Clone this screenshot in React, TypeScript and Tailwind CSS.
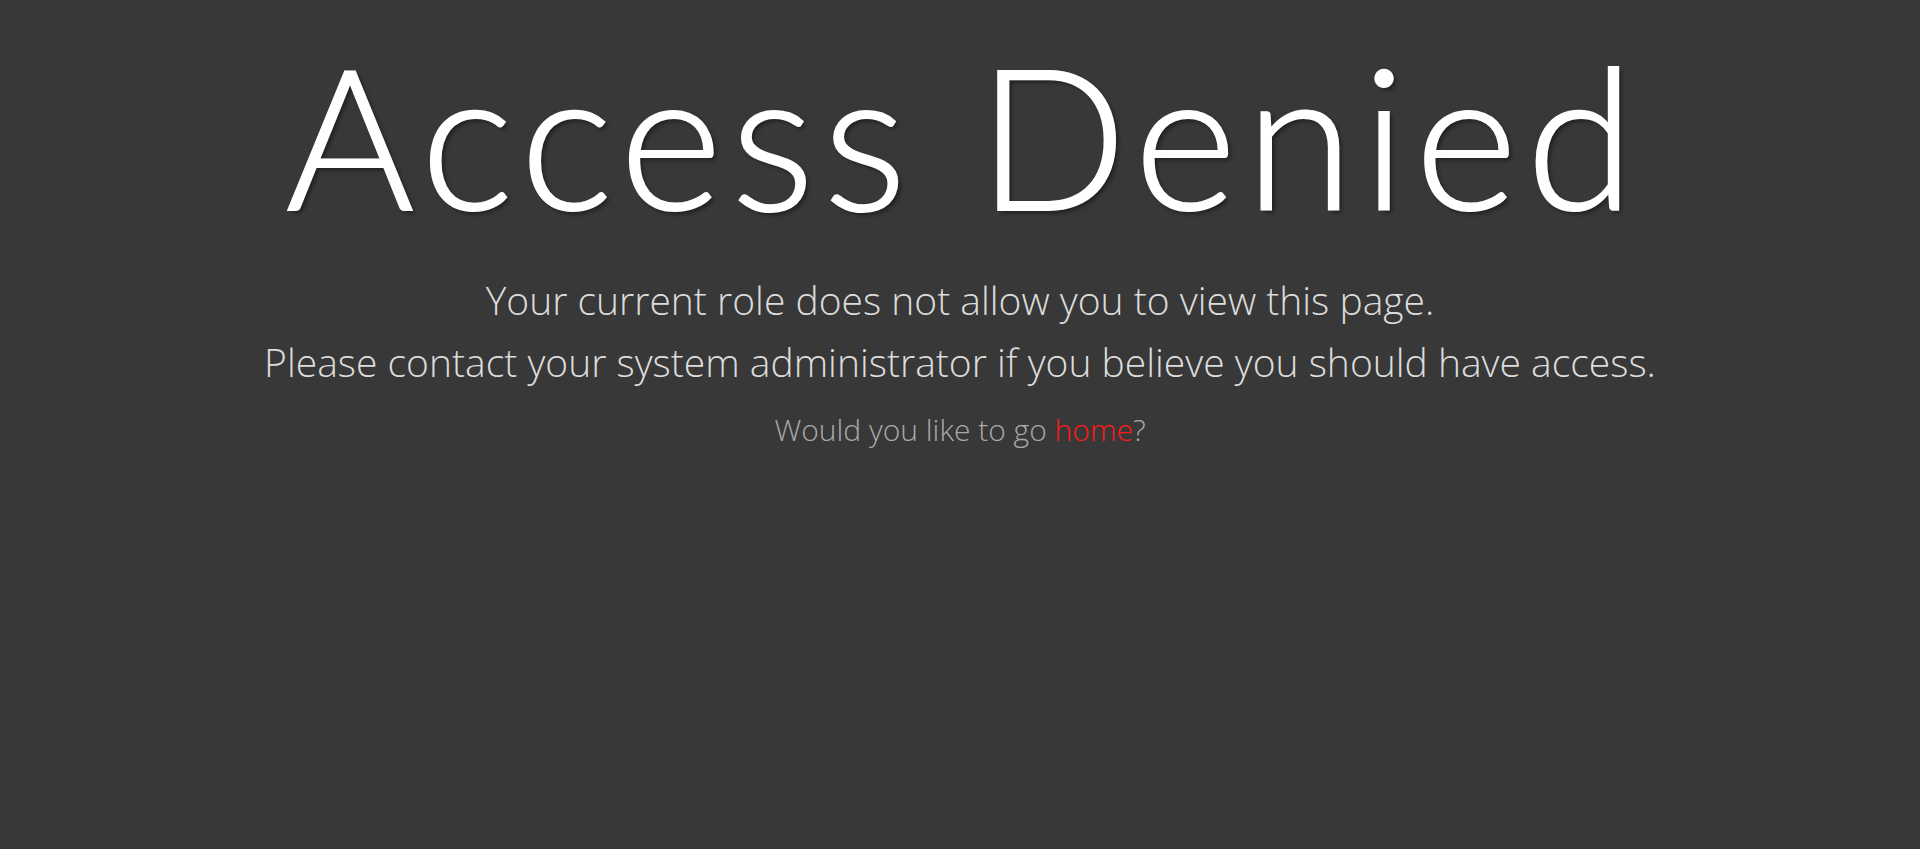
// Access denied page

export default function App() {
  return (
    <div className="min-h-[849px] w-full bg-[#383838] flex flex-col items-center text-center font-['Open_Sans',sans-serif]">
      <h1 className="mt-[20px] pl-[9px] text-[196px] leading-[230px] font-light tracking-[9px] text-white font-['Lato','Open_Sans',sans-serif] [-webkit-text-stroke:2px_white] [text-shadow:3px_3px_4px_rgba(0,0,0,0.45)]">
        Access Denied
      </h1>
      <div className="mt-[19px] text-[39px] leading-[62px] font-light text-[#dcdcdc]">
        <p>Your current role does not allow you to view this page.</p>
        <p>Please contact your system administrator if you believe you should have access.</p>
      </div>
      <p className="mt-[17px] text-[30px] leading-[40px] font-light text-[#a9a9a9]">
        Would you like to go{' '}
        <a href="#" className="text-[#ff1a1a] no-underline">home</a>?
      </p>
    </div>
  );
}
